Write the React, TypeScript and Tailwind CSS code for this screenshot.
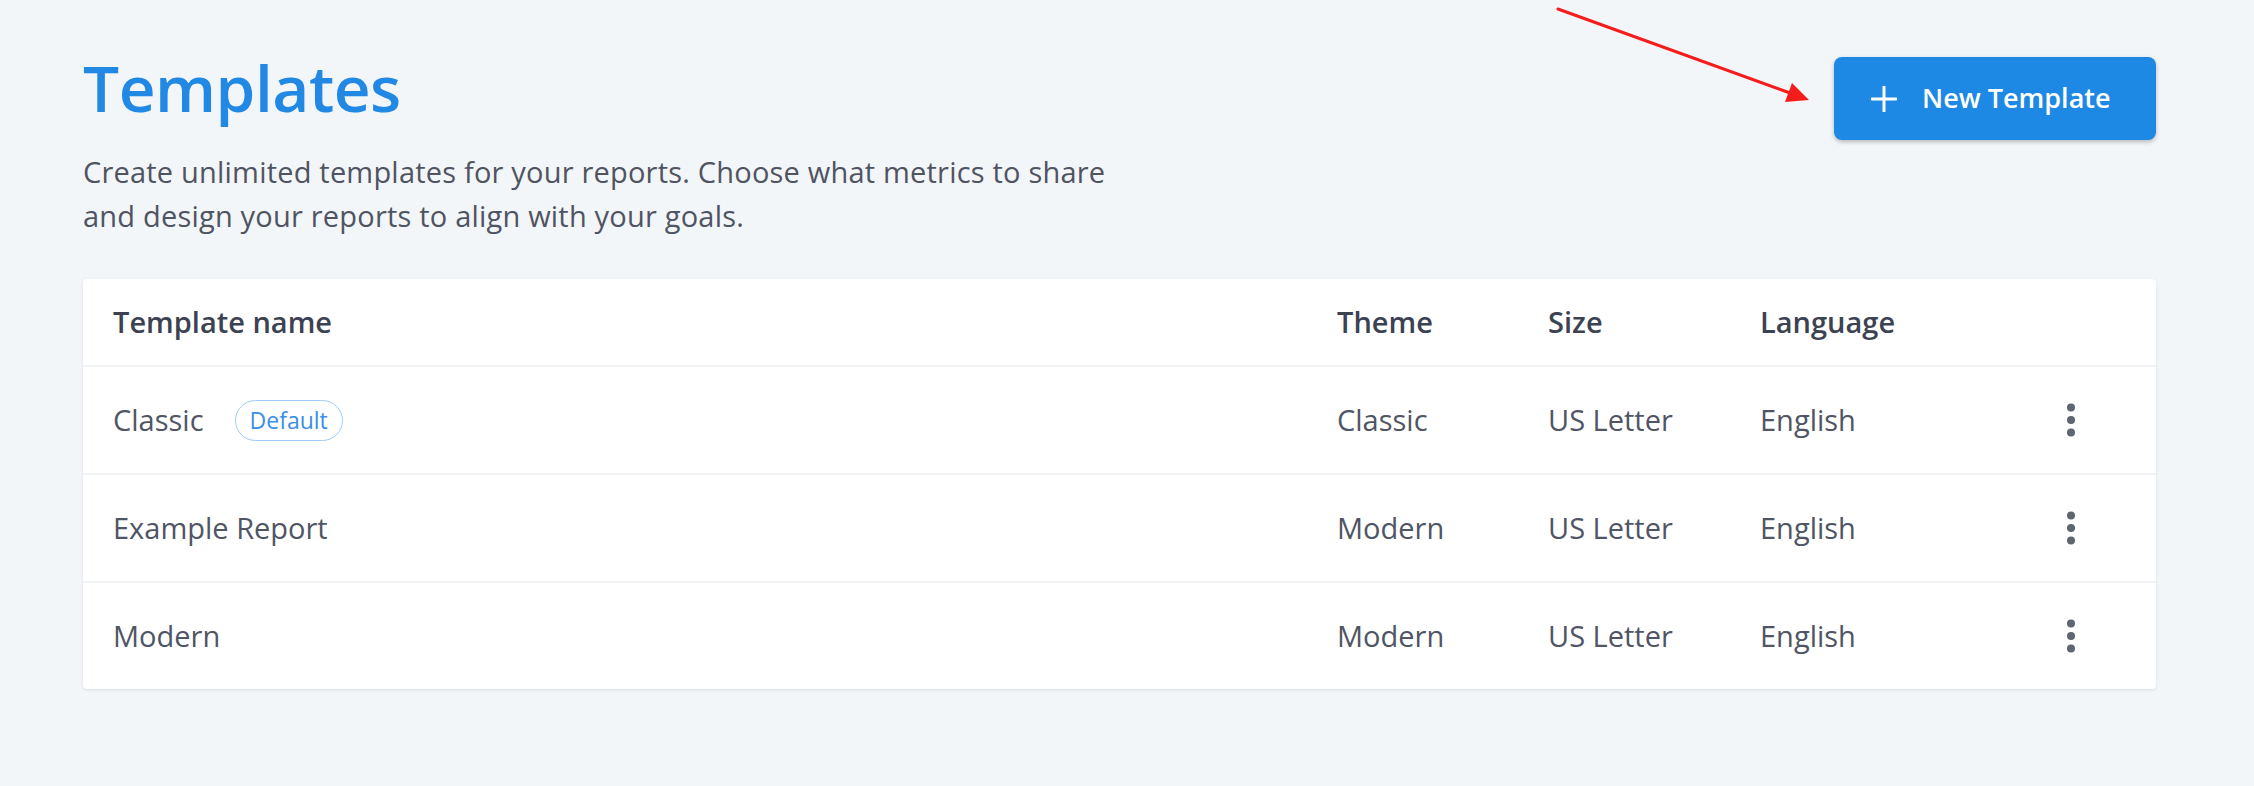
import React from 'react';

type Template = {
  name: string;
  theme: string;
  size: string;
  language: string;
  isDefault?: boolean;
};

const templates: Template[] = [
  { name: 'Classic', theme: 'Classic', size: 'US Letter', language: 'English', isDefault: true },
  { name: 'Example Report', theme: 'Modern', size: 'US Letter', language: 'English' },
  { name: 'Modern', theme: 'Modern', size: 'US Letter', language: 'English' },
];

const rowGrid = 'grid grid-cols-[1224px_211px_212px_281px_60px] pl-[30px] items-center';

function PlusIcon() {
  return (
    <svg width="26" height="26" viewBox="0 0 26 26" fill="none">
      <path d="M13 1v24M1 13h24" stroke="white" strokeWidth="3" strokeLinecap="round" />
    </svg>
  );
}

function DotsIcon() {
  return (
    <svg width="10" height="34" viewBox="0 0 10 34" fill="#5f6571">
      <circle cx="5" cy="4.5" r="4" />
      <circle cx="5" cy="17" r="4" />
      <circle cx="5" cy="29.5" r="4" />
    </svg>
  );
}

export default function App() {
  return (
    <div
      className="relative min-h-[786px] w-full bg-[#f3f6f9] text-[#4f5564]"
      style={{ fontFamily: '"Open Sans", "Noto Sans", sans-serif' }}
    >
      {/* annotation arrow */}
      <svg className="absolute left-[1550px] top-0 pointer-events-none" width="270" height="110" viewBox="0 0 270 110">
        <line x1="8" y1="9" x2="240" y2="93" stroke="#f51c1c" strokeWidth="3" strokeLinecap="round" />
        <polygon points="259,100 235,102 242,83" fill="#f51c1c" />
      </svg>

      <div className="ml-[83px] w-[2073px] pt-[56px]">
        {/* Header */}
        <div className="flex items-start justify-between">
          <div>
            <h1 className="text-[64px] leading-[64px] font-semibold text-[#2189e4] tracking-[-0.5px]">Templates</h1>
            <p className="mt-[30px] text-[29px] leading-[44px] tracking-[0.2px] text-[#4f5462]">
              Create unlimited templates for your reports. Choose what metrics to share
              <br />
              and design your reports to align with your goals.
            </p>
          </div>
          <button className="mt-[1px] flex h-[83px] w-[322px] items-center gap-[25px] rounded-[8px] bg-[#1e88e5] pl-[37px] text-[27px] font-semibold text-white shadow-[0_2px_4px_rgba(0,0,0,0.25)]">
            <PlusIcon />
            <span>New Template</span>
          </button>
        </div>

        {/* Table */}
        <div className="mt-[41px] overflow-hidden rounded-[4px] bg-white shadow-[0_1px_3px_rgba(30,40,60,0.12)]">
          <div className={`${rowGrid} h-[86px] text-[29px] font-semibold text-[#3c4252]`}>
            <div>Template name</div>
            <div>Theme</div>
            <div>Size</div>
            <div>Language</div>
            <div />
          </div>
          {templates.map((t) => (
            <div key={t.name} className={`${rowGrid} h-[108px] border-t-2 border-[#f1f3f6] text-[29px] text-[#4f5564]`}>
              <div className="flex items-center gap-[31px]">
                <span>{t.name}</span>
                {t.isDefault && (
                  <span className="flex h-[41px] items-center rounded-full border-[1.5px] border-[#9fcbf4] px-[14px] text-[23px] font-medium text-[#3a8fe6]">
                    Default
                  </span>
                )}
              </div>
              <div>{t.theme}</div>
              <div>{t.size}</div>
              <div>{t.language}</div>
              <div className="flex justify-center">
                <DotsIcon />
              </div>
            </div>
          ))}
        </div>
      </div>
    </div>
  );
}
